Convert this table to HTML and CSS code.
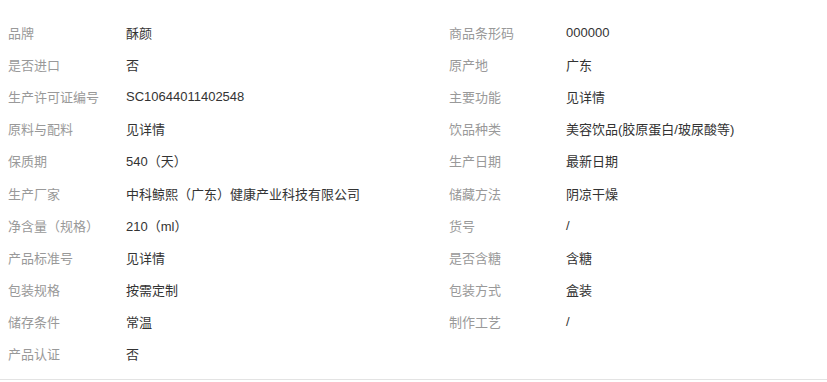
FILE: index.html
```html
<!DOCTYPE html>
<html lang="zh-CN">
<head>
<meta charset="utf-8">
<link rel="stylesheet" href="styles.css">
</head>
<body>
<div class="attrs">
  <ul class="attr-list">
    <li class="attr"><span class="label">品牌</span><span class="value">酥颜</span></li>
    <li class="attr"><span class="label">商品条形码</span><span class="value">000000</span></li>
    <li class="attr"><span class="label">是否进口</span><span class="value">否</span></li>
    <li class="attr"><span class="label">原产地</span><span class="value">广东</span></li>
    <li class="attr"><span class="label">生产许可证编号</span><span class="value">SC10644011402548</span></li>
    <li class="attr"><span class="label">主要功能</span><span class="value">见详情</span></li>
    <li class="attr"><span class="label">原料与配料</span><span class="value">见详情</span></li>
    <li class="attr"><span class="label">饮品种类</span><span class="value">美容饮品(胶原蛋白/玻尿酸等)</span></li>
    <li class="attr"><span class="label">保质期</span><span class="value">540（天）</span></li>
    <li class="attr"><span class="label">生产日期</span><span class="value">最新日期</span></li>
    <li class="attr"><span class="label">生产厂家</span><span class="value">中科鲸熙（广东）健康产业科技有限公司</span></li>
    <li class="attr"><span class="label">储藏方法</span><span class="value">阴凉干燥</span></li>
    <li class="attr"><span class="label">净含量（规格）</span><span class="value">210（ml）</span></li>
    <li class="attr"><span class="label">货号</span><span class="value">/</span></li>
    <li class="attr"><span class="label">产品标准号</span><span class="value">见详情</span></li>
    <li class="attr"><span class="label">是否含糖</span><span class="value">含糖</span></li>
    <li class="attr"><span class="label">包装规格</span><span class="value">按需定制</span></li>
    <li class="attr"><span class="label">包装方式</span><span class="value">盒装</span></li>
    <li class="attr"><span class="label">储存条件</span><span class="value">常温</span></li>
    <li class="attr"><span class="label">制作工艺</span><span class="value">/</span></li>
    <li class="attr"><span class="label">产品认证</span><span class="value">否</span></li>
  </ul>
</div>
</body>
</html>
```
FILE: styles.css
```css
html, body {
  margin: 0;
  padding: 0;
  background: #fff;
}
.attrs {
  width: 827px;
  box-sizing: border-box;
  padding: 16px 0 9px 8px;
  border-bottom: 1px solid #e3e3e3;
  font-family: "Liberation Sans", "Noto Sans CJK SC", sans-serif;
  font-size: 13px;
}
.attr-list {
  list-style: none;
  margin: 0;
  padding: 0;
  display: grid;
  grid-template-columns: 441px 1fr;
  grid-auto-rows: 32.2px;
}
.attr {
  display: flex;
  align-items: center;
  white-space: nowrap;
}
.label {
  width: 118px;
  flex: none;
  color: #999;
}
.attr:nth-child(even) .label {
  width: 117px;
}
.value {
  color: #333;
}
```
